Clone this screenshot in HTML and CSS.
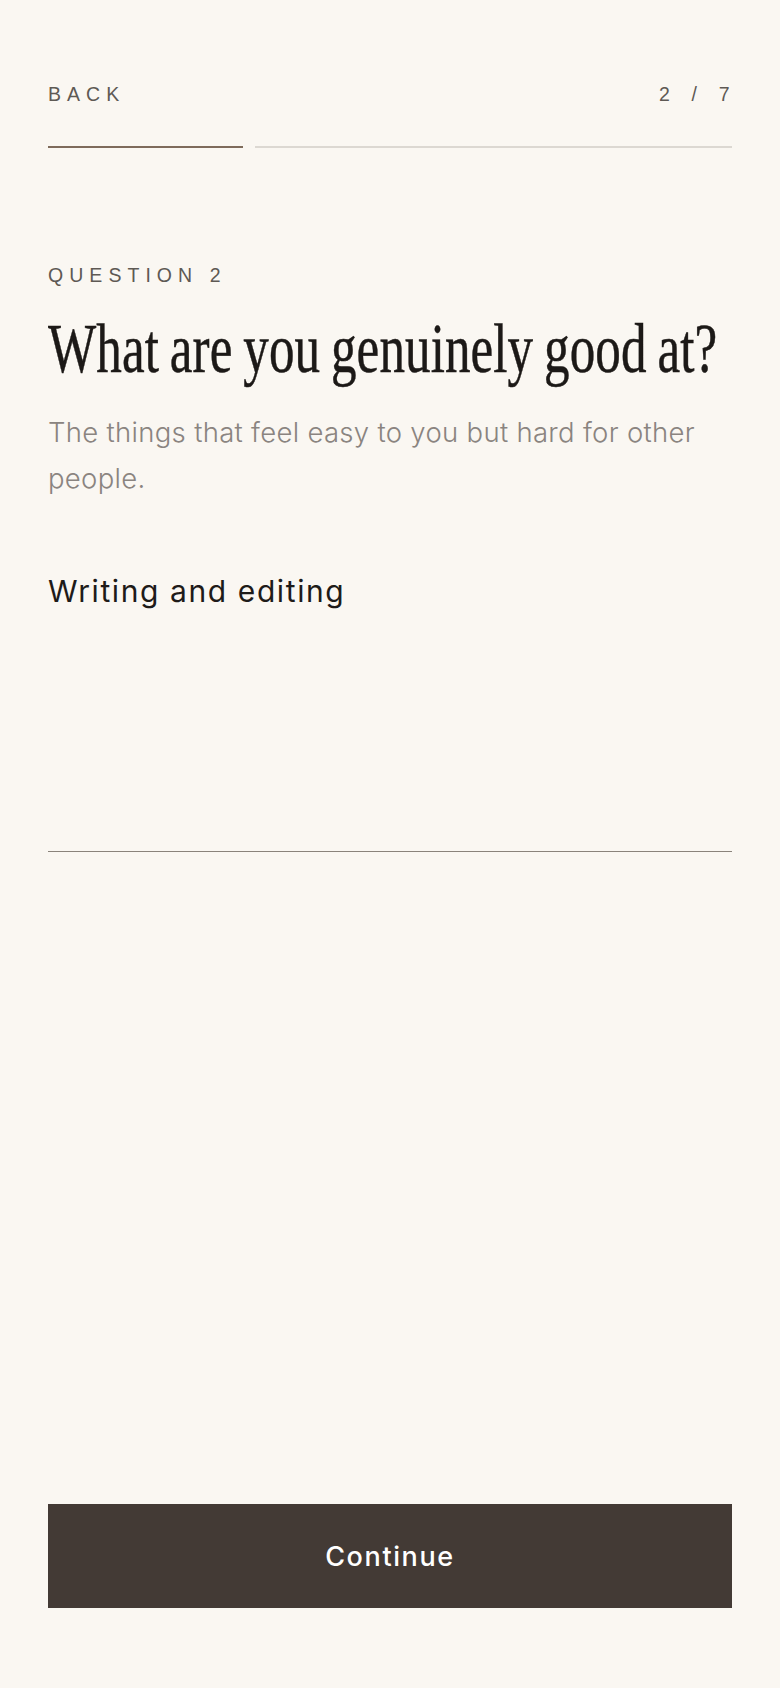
FILE: index.html
```html
<!DOCTYPE html>
<html lang="en">
<head>
<meta charset="utf-8">
<meta name="viewport" content="width=device-width, initial-scale=1">
<title>Question 2</title>
<link rel="stylesheet" href="styles.css">
</head>
<body>
<main class="page">
  <header class="topbar">
    <a class="back" href="#">Back</a>
    <span class="step">2 / 7</span>
  </header>
  <div class="progress">
    <div class="progress-fill" style="width: 28.57%"></div>
    <div class="progress-track"></div>
  </div>

  <section class="question">
    <p class="eyebrow">Question 2</p>
    <h1 class="title"><span class="title-inner">What are you genuinely good at?</span></h1>
    <p class="hint">The things that feel easy to you but hard for other people.</p>
  </section>

  <div class="answer">Writing and editing</div>

  <div class="footer">
    <button class="continue" type="button">Continue</button>
  </div>
</main>
</body>
</html>
```

FILE: styles.css
```css
* { box-sizing: border-box; }

html, body {
  margin: 0;
  padding: 0;
  background: #faf7f2;
}

.page {
  min-height: 100vh;
  display: flex;
  flex-direction: column;
  padding: 80px 48px 80px;
}

.topbar {
  display: flex;
  justify-content: space-between;
  align-items: center;
  font-family: "Liberation Sans", Arial, sans-serif;
  font-size: 19.5px;
  line-height: 28px;
  letter-spacing: 0.31em;
  color: #5e5954;
}

.back {
  color: inherit;
  text-decoration: none;
  text-transform: uppercase;
}

.step {
  letter-spacing: 0.42em;
  margin-right: -0.3em;
}

.progress {
  display: flex;
  align-items: center;
  gap: 12px;
  margin-top: 37px;
  height: 4px;
}

.progress-fill {
  height: 2px;
  background: #7e6b5b;
  flex: none;
}

.progress-track {
  flex: 1;
  height: 2px;
  background: #dcd8d2;
}

.question {
  margin-top: 112px;
}

.eyebrow {
  margin: 0;
  font-family: "Liberation Sans", Arial, sans-serif;
  font-size: 19.5px;
  line-height: 28px;
  letter-spacing: 0.31em;
  text-transform: uppercase;
  color: #5e5954;
}

.title {
  margin: 20px 0 0;
  font-family: "Liberation Serif", "Times New Roman", serif;
  font-weight: 400;
  font-size: 69px;
  line-height: 80px;
  color: #1c1917;
  white-space: nowrap;
  overflow: hidden;
}

.title-inner {
  display: block;
  width: 135%;
  transform: scaleX(0.74);
  transform-origin: left center;
  letter-spacing: 0.002em;
  word-spacing: -0.04em;
  -webkit-text-stroke: 0.5px #1c1917;
}

.hint {
  margin: 20px 0 0;
  font-family: "Inter", "Open Sans", sans-serif;
  font-weight: 300;
  font-size: 27.5px;
  line-height: 46px;
  letter-spacing: 0.3px;
  color: #8a8480;
}

.answer {
  margin-top: 70px;
  height: 281px;
  border-bottom: 1.5px solid #8a837b;
  font-family: "Inter", "Open Sans", sans-serif;
  font-weight: 400;
  font-size: 30px;
  line-height: 40px;
  letter-spacing: 1.6px;
  color: #1e1b19;
}

.footer {
  margin-top: auto;
}

.continue {
  display: block;
  width: 100%;
  height: 104px;
  border: 0;
  border-radius: 0;
  background: #433a35;
  color: #ffffff;
  font-family: "Inter", "Open Sans", sans-serif;
  font-weight: 500;
  font-size: 27px;
  letter-spacing: 0.06em;
  cursor: pointer;
}
```
